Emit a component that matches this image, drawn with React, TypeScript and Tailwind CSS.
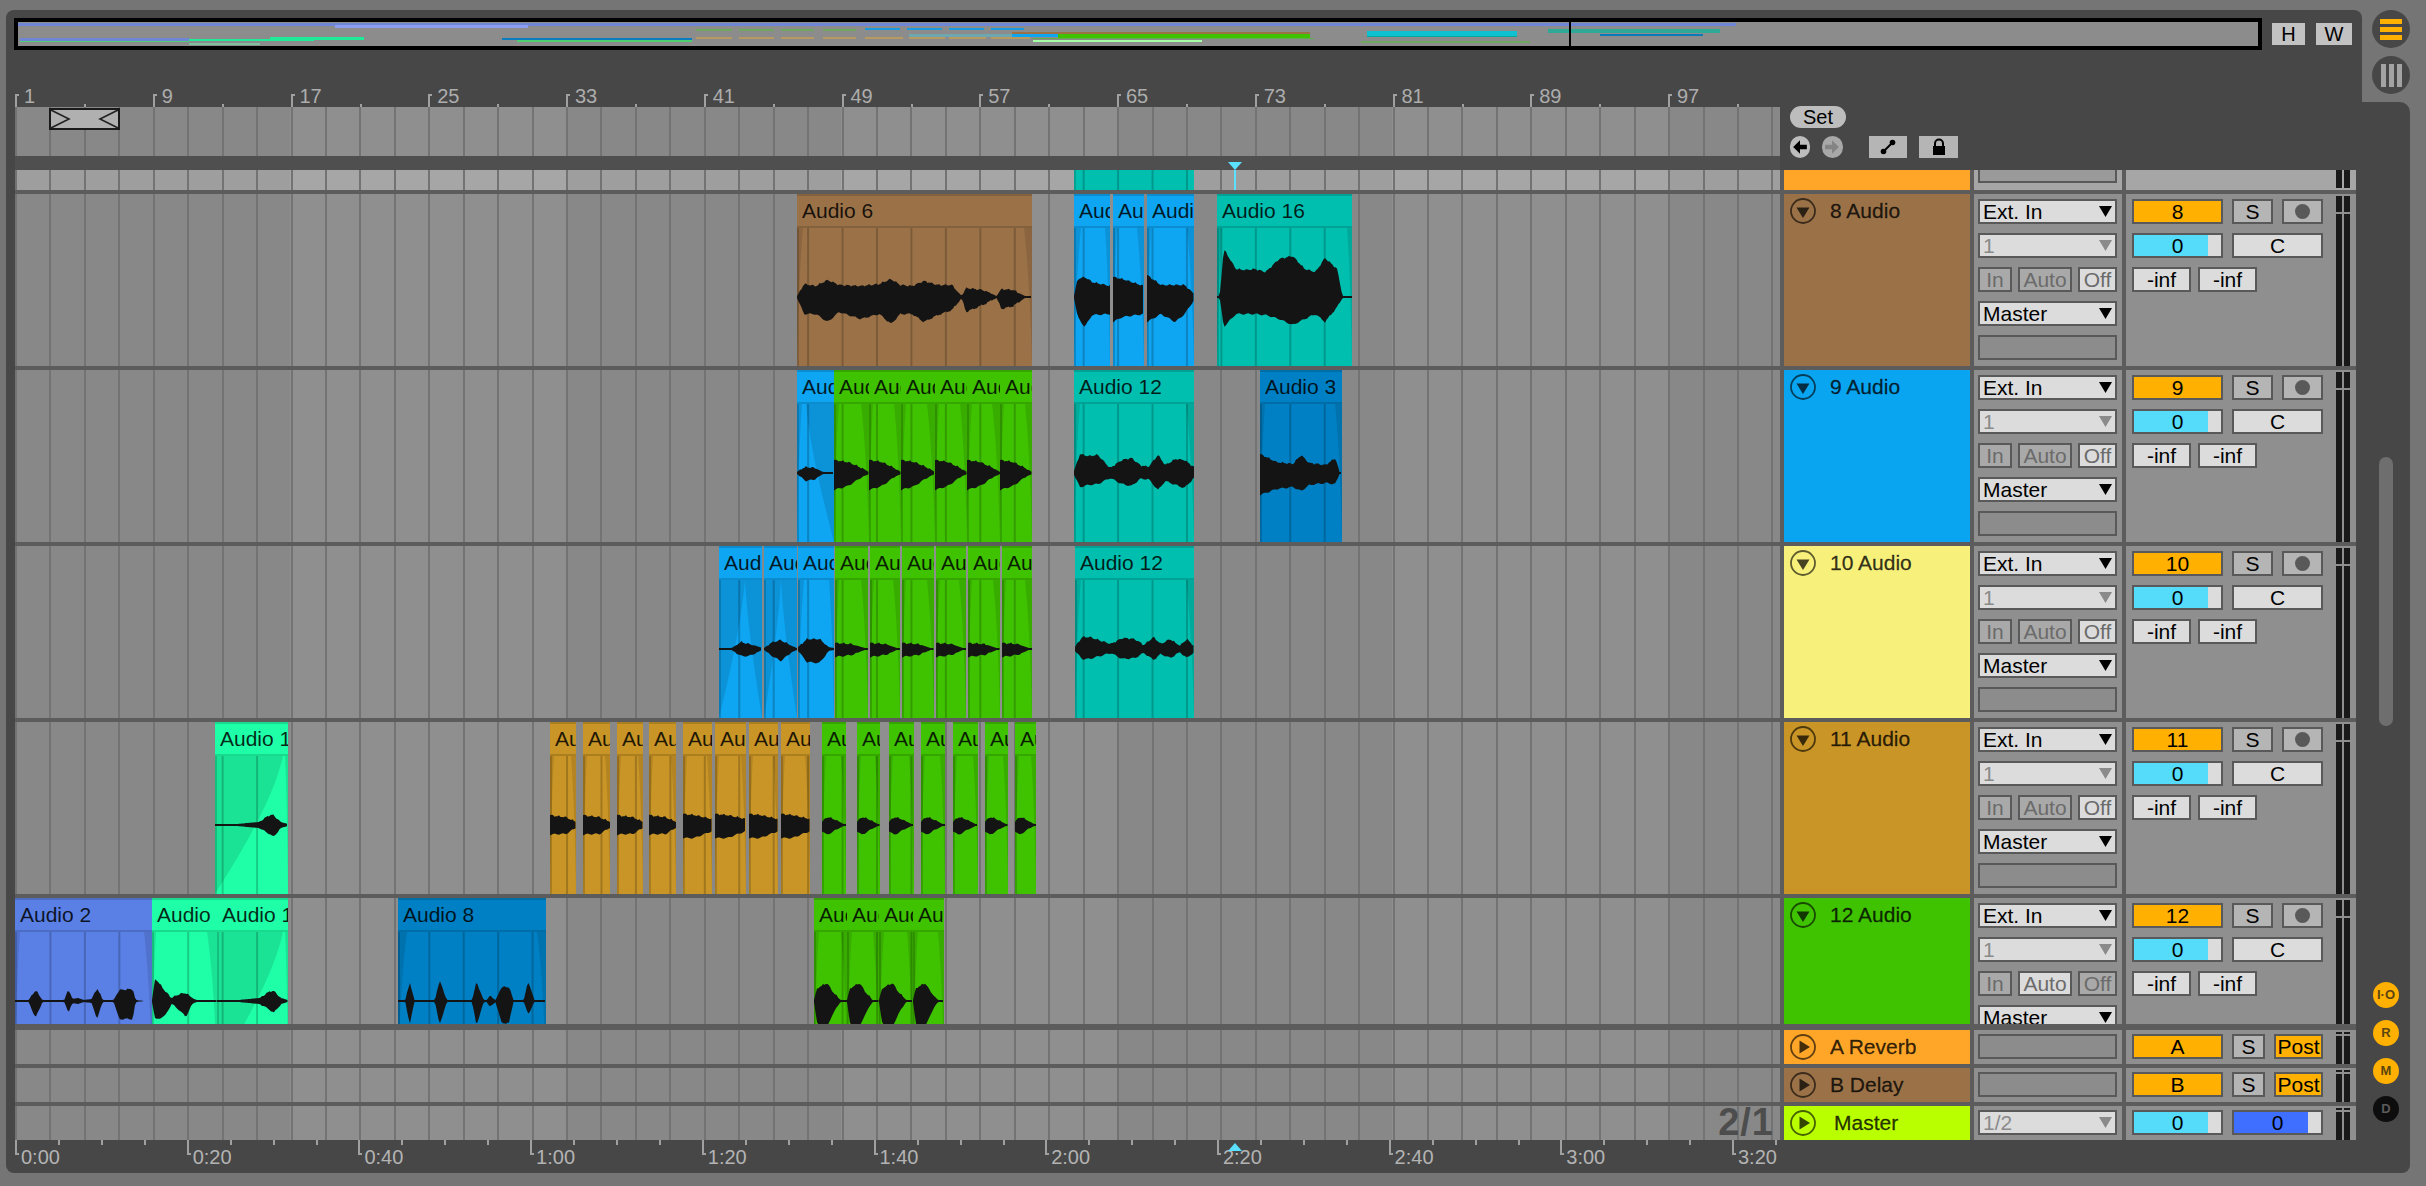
import type { ReactNode } from "react";

type Env = [number, number, number][];

interface ClipData {
  x0: number;
  x1: number;
  name: string;
  color: string;
  env?: Env;
  fade?: [number, number];
}

const GRID_STEP = 34.44;
const ORIGIN = 15;

const GRID =
  "bg-[repeating-linear-gradient(90deg,#737373_0,#737373_2px,transparent_2px,transparent_34.44px),repeating-linear-gradient(90deg,rgba(0,0,0,0.05)_0,rgba(0,0,0,0.05)_275.5px,transparent_275.5px,transparent_551px)]";

const BROWN = "#9b7248";
const BLUE = "#0ea5f2";
const TEAL = "#00bfaf";
const GREEN = "#3fc300";
const DEEP = "#0080c4";
const MINT = "#1effa8";
const OCHRE = "#c99526";
const PERI = "#5a80e6";

const A6: Env = [[0, 1, 1], [0.03, 13, 17], [0.08, 11, 17], [0.13, 17, 25], [0.18, 12, 15], [0.27, 11, 22], [0.35, 13, 17], [0.4, 18, 27], [0.44, 12, 17], [0.49, 11, 17], [0.54, 16, 25], [0.6, 12, 18], [0.66, 12, 13], [0.7, 1, 1], [0.72, 9, 15], [0.79, 7, 8], [0.85, 1, 1], [0.87, 8, 12], [0.92, 7, 9], [0.97, 1, 1], [1, 1, 1]];
const A16: Env = [[0, 1, 1], [0.02, 1, 1], [0.05, 48, 30], [0.14, 28, 17], [0.21, 27, 17], [0.28, 28, 17], [0.36, 25, 18], [0.46, 38, 22], [0.56, 41, 28], [0.65, 28, 22], [0.73, 25, 17], [0.8, 39, 25], [0.89, 28, 10], [0.93, 1, 1], [1, 1, 1]];
const B1: Env = [[0, 1, 1], [0.1, 18, 20], [0.3, 20, 30], [0.5, 15, 18], [1, 11, 17]];
const B2: Env = [[0, 20, 25], [0.3, 18, 20], [1, 11, 17]];
const B3: Env = [[0, 22, 25], [0.3, 12, 17], [0.6, 12, 25], [0.8, 12, 17], [1, 3, 3]];
const A12: Env = [[0, 2, 2], [0.05, 19, 14], [0.12, 17, 12], [0.2, 18, 11], [0.3, 5, 5], [0.4, 13, 11], [0.48, 15, 13], [0.55, 8, 6], [0.62, 6, 6], [0.7, 18, 17], [0.76, 8, 8], [0.85, 14, 12], [0.92, 13, 15], [1, 6, 5]];
const A12B: Env = [[0, 2, 2], [0.06, 12, 10], [0.12, 12, 10], [0.3, 5, 4], [0.4, 11, 10], [0.5, 10, 9], [0.58, 4, 4], [0.66, 12, 11], [0.72, 5, 5], [0.8, 10, 9], [0.88, 3, 3], [0.94, 10, 9], [1, 3, 3]];
const A3: Env = [[0, 19, 22], [0.2, 11, 16], [0.4, 9, 14], [0.5, 18, 18], [0.6, 10, 12], [0.8, 8, 10], [0.92, 15, 11], [0.97, 1, 1], [1, 1, 1]];
const DROP_S: Env = [[0, 1, 1], [0.1, 4, 4], [0.25, 6, 8], [0.5, 5, 6], [0.7, 1, 1], [1, 1, 1]];
const POINT_L: Env = [[0, 13, 17], [0.4, 11, 13], [0.8, 5, 4], [1, 1, 1]];
const POINT_M: Env = [[0, 6, 8], [0.5, 5, 6], [0.9, 1, 1], [1, 1, 1]];
const POINT_11: Env = [[0, 3, 6], [0.2, 8, 10], [0.5, 6, 6], [0.9, 1, 1], [1, 1, 1]];
const BELL_1: Env = [[0, 1, 1], [0.3, 1, 1], [0.5, 7, 7], [0.7, 5, 7], [0.95, 2, 2], [1, 1, 1]];
const BELL_2: Env = [[0, 1, 1], [0.2, 6, 6], [0.5, 9, 12], [0.85, 3, 3], [1, 1, 1]];
const BELL_3: Env = [[0, 2, 2], [0.25, 10, 13], [0.6, 10, 14], [0.85, 2, 2], [1, 1, 1]];
const BLOCK_A: Env = [[0, 10, 10], [0.2, 9, 9], [0.6, 8, 9], [1, 3, 3]];
const BLOCK_B: Env = [[0, 11, 13], [0.4, 10, 13], [1, 6, 6]];
const SWELL: Env = [[0, 1, 1], [0.3, 1, 1], [0.6, 3, 3], [0.75, 10, 9], [0.8, 10, 12], [0.9, 3, 3], [1, 1, 1]];
const SPIKES_2: Env = [[0, 1, 1], [0.1, 1, 1], [0.15, 11, 17], [0.2, 1, 1], [0.36, 1, 1], [0.39, 12, 11], [0.42, 2, 2], [0.46, 3, 3], [0.5, 1, 1], [0.56, 2, 2], [0.6, 13, 18], [0.64, 1, 1], [0.72, 1, 1], [0.76, 11, 18], [0.86, 12, 18], [0.88, 1, 1], [0.95, 0, 0], [1, 0, 0]];
const HIT: Env = [[0, 1, 1], [0.05, 23, 19], [0.2, 10, 15], [0.3, 3, 3], [0.42, 7, 9], [0.52, 8, 16], [0.62, 3, 3], [0.68, 1, 1], [1, 1, 1]];
const SPIKES_8: Env = [[0, 1, 1], [0.05, 1, 1], [0.08, 19, 24], [0.11, 1, 1], [0.25, 1, 1], [0.28, 21, 24], [0.33, 1, 1], [0.5, 1, 1], [0.53, 19, 24], [0.58, 1, 1], [0.6, 1, 1], [0.62, 5, 6], [0.66, 1, 1], [0.7, 14, 22], [0.75, 14, 22], [0.78, 1, 1], [0.85, 1, 1], [0.88, 20, 14], [0.92, 1, 1], [1, 1, 1]];
const BUMP: Env = [[0, 1, 1], [0.1, 13, 24], [0.4, 18, 26], [0.55, 10, 14], [0.8, 1, 1], [1, 1, 1]];

const ROW_8: ClipData[] = [
  { x0: 797, x1: 1032, name: "Audio 6", color: BROWN, env: A6, fade: [6, 8] },
  { x0: 1074, x1: 1110, name: "Audio", color: BLUE, env: B1, fade: [7, 5] },
  { x0: 1113, x1: 1144, name: "Audio", color: BLUE, env: B2, fade: [4, 7] },
  { x0: 1147, x1: 1194, name: "Audio", color: BLUE, env: B3, fade: [4, 7] },
  { x0: 1217, x1: 1352, name: "Audio 16", color: TEAL, env: A16, fade: [5, 5] },
];

const ROW_9: ClipData[] = [
  { x0: 797, x1: 834, name: "Audio", color: BLUE, env: DROP_S, fade: [5, 28] },
  { x0: 834, x1: 869, name: "Audio", color: GREEN, env: POINT_L, fade: [5, 8] },
  { x0: 869, x1: 901, name: "Audio", color: GREEN, env: POINT_L, fade: [4, 7] },
  { x0: 901, x1: 935, name: "Audio", color: GREEN, env: POINT_L, fade: [5, 8] },
  { x0: 935, x1: 967, name: "Audio", color: GREEN, env: POINT_L, fade: [4, 7] },
  { x0: 967, x1: 1000, name: "Audio", color: GREEN, env: POINT_L, fade: [5, 8] },
  { x0: 1000, x1: 1032, name: "Audio", color: GREEN, env: POINT_L, fade: [4, 7] },
  { x0: 1074, x1: 1194, name: "Audio 12", color: TEAL, env: A12, fade: [6, 8] },
  { x0: 1260, x1: 1342, name: "Audio 3", color: DEEP, env: A3, fade: [5, 7] },
];

const ROW_10: ClipData[] = [
  { x0: 719, x1: 762, name: "Audio", color: BLUE, env: BELL_1, fade: [26, 17] },
  { x0: 764, x1: 797, name: "Audio", color: BLUE, env: BELL_2, fade: [17, 16] },
  { x0: 798, x1: 834, name: "Audio", color: BLUE, env: BELL_3, fade: [6, 5] },
  { x0: 835, x1: 868, name: "Audio", color: GREEN, env: POINT_M, fade: [4, 7] },
  { x0: 870, x1: 900, name: "Audio", color: GREEN, env: POINT_M, fade: [4, 7] },
  { x0: 902, x1: 934, name: "Audio", color: GREEN, env: POINT_M, fade: [4, 7] },
  { x0: 936, x1: 966, name: "Audio", color: GREEN, env: POINT_M, fade: [4, 7] },
  { x0: 968, x1: 1000, name: "Audio", color: GREEN, env: POINT_M, fade: [4, 7] },
  { x0: 1002, x1: 1032, name: "Audio", color: GREEN, env: POINT_M, fade: [4, 7] },
  { x0: 1075, x1: 1194, name: "Audio 12", color: TEAL, env: A12B, fade: [6, 8] },
];

const ROW_11: ClipData[] = [
  { x0: 215, x1: 288, name: "Audio 14", color: MINT, env: SWELL, fade: [68, 3] },
  { x0: 550, x1: 576, name: "Audio", color: OCHRE, env: BLOCK_A, fade: [4, 5] },
  { x0: 583, x1: 610, name: "Audio", color: OCHRE, env: BLOCK_A, fade: [4, 5] },
  { x0: 617, x1: 643, name: "Audio", color: OCHRE, env: BLOCK_A, fade: [4, 5] },
  { x0: 649, x1: 676, name: "Audio", color: OCHRE, env: BLOCK_A, fade: [4, 5] },
  { x0: 683, x1: 712, name: "Audio", color: OCHRE, env: BLOCK_B, fade: [4, 5] },
  { x0: 715, x1: 746, name: "Audio", color: OCHRE, env: BLOCK_B, fade: [4, 5] },
  { x0: 749, x1: 778, name: "Audio", color: OCHRE, env: BLOCK_B, fade: [4, 5] },
  { x0: 781, x1: 810, name: "Audio", color: OCHRE, env: BLOCK_B, fade: [4, 5] },
  { x0: 822, x1: 846, name: "Audio", color: GREEN, env: POINT_11, fade: [4, 5] },
  { x0: 857, x1: 880, name: "Audio", color: GREEN, env: POINT_11, fade: [4, 5] },
  { x0: 889, x1: 914, name: "Audio", color: GREEN, env: POINT_11, fade: [4, 5] },
  { x0: 921, x1: 945, name: "Audio", color: GREEN, env: POINT_11, fade: [4, 5] },
  { x0: 953, x1: 978, name: "Audio", color: GREEN, env: POINT_11, fade: [4, 5] },
  { x0: 985, x1: 1008, name: "Audio", color: GREEN, env: POINT_11, fade: [4, 5] },
  { x0: 1015, x1: 1036, name: "Audio", color: GREEN, env: POINT_11, fade: [4, 5] },
];

const ROW_12: ClipData[] = [
  { x0: 15, x1: 152, name: "Audio 2", color: PERI, env: SPIKES_2, fade: [5, 8] },
  { x0: 152, x1: 217, name: "Audio 14", color: MINT, env: HIT, fade: [4, 10] },
  { x0: 217, x1: 288, name: "Audio 14", color: MINT, env: SWELL, fade: [66, 3] },
  { x0: 398, x1: 546, name: "Audio 8", color: DEEP, env: SPIKES_8, fade: [9, 9] },
  { x0: 814, x1: 847, name: "Audio", color: GREEN, env: BUMP, fade: [5, 6] },
  { x0: 847, x1: 879, name: "Audio", color: GREEN, env: BUMP, fade: [5, 6] },
  { x0: 879, x1: 913, name: "Audio", color: GREEN, env: BUMP, fade: [5, 6] },
  { x0: 913, x1: 944, name: "Audio", color: GREEN, env: BUMP, fade: [5, 6] },
];

const TRACKS = [
  { num: "8", name: "8 Audio", color: BROWN, height: "h-[172px]", clips: ROW_8 },
  { num: "9", name: "9 Audio", color: "#0aa5f0", height: "h-[172px]", clips: ROW_9 },
  { num: "10", name: "10 Audio", color: "#f7f07a", height: "h-[172px]", clips: ROW_10 },
  { num: "11", name: "11 Audio", color: OCHRE, height: "h-[172px]", clips: ROW_11 },
  { num: "12", name: "12 Audio", color: GREEN, height: "h-[126px]", clips: ROW_12, auto: true },
];

const OVERVIEW = [
  { x: 18, y: 23, w: 1718, h: 3, c: "#6f86d6" },
  { x: 335, y: 25, w: 193, h: 3, c: "#8c9cf0" },
  { x: 20, y: 38, w: 169, h: 3, c: "#6f86d6" },
  { x: 20, y: 41, w: 169, h: 1, c: "#4fd070" },
  { x: 189, y: 39, w: 125, h: 2, c: "#1eea98" },
  { x: 270, y: 37, w: 94, h: 3, c: "#1eea98" },
  { x: 189, y: 43, w: 71, h: 2, c: "#7fc0a0" },
  { x: 502, y: 38, w: 190, h: 2, c: "#0c7cc0" },
  { x: 517, y: 40, w: 175, h: 2, c: "#4fd070" },
  { x: 696, y: 29, w: 36, h: 2, c: "#6ea860" },
  { x: 739, y: 29, w: 35, h: 2, c: "#6ea860" },
  { x: 781, y: 29, w: 33, h: 2, c: "#6ea860" },
  { x: 823, y: 29, w: 33, h: 2, c: "#6ea860" },
  { x: 696, y: 37, w: 36, h: 2, c: "#b89a60" },
  { x: 739, y: 37, w: 35, h: 2, c: "#b89a60" },
  { x: 781, y: 37, w: 33, h: 2, c: "#b89a60" },
  { x: 823, y: 37, w: 33, h: 2, c: "#b89a60" },
  { x: 865, y: 28, w: 35, h: 2, c: "#1c9ae0" },
  { x: 907, y: 28, w: 35, h: 2, c: "#1c9ae0" },
  { x: 949, y: 28, w: 35, h: 2, c: "#1c9ae0" },
  { x: 991, y: 28, w: 33, h: 2, c: "#1c9ae0" },
  { x: 865, y: 37, w: 38, h: 2, c: "#b89a60" },
  { x: 909, y: 37, w: 36, h: 2, c: "#b89a60" },
  { x: 949, y: 37, w: 37, h: 2, c: "#b89a60" },
  { x: 991, y: 37, w: 39, h: 2, c: "#b89a60" },
  { x: 909, y: 34, w: 103, h: 3, c: "#6fa7b0" },
  { x: 1012, y: 32, w: 298, h: 2, c: "#9b7248" },
  { x: 1012, y: 34, w: 46, h: 3, c: "#0ea5f2" },
  { x: 1058, y: 34, w: 252, h: 4, c: "#3fc300" },
  { x: 1033, y: 38, w: 281, h: 1, c: "#5eb04a" },
  { x: 1033, y: 40, w: 169, h: 2, c: "#a6ffa6" },
  { x: 1367, y: 31, w: 150, h: 5, c: "#0ec0d0" },
  { x: 1367, y: 36, w: 150, h: 1, c: "#00a89a" },
  { x: 1361, y: 41, w: 169, h: 2, c: "#6ea860" },
  { x: 1548, y: 29, w: 172, h: 4, c: "#30a898" },
  { x: 1600, y: 34, w: 103, h: 2, c: "#0a7ab8" },
  { x: 1569, y: 22, w: 2, h: 24, c: "#000000" },
];

const BAR_LABELS = Array.from({ length: 13 }, (_, i) => ({ label: String(1 + i * 8), x: i * 137.75 }));
const TIME_LABELS = Array.from({ length: 11 }, (_, i) => {
  const total = i * 20;
  const sec = total % 60;
  return { label: `${Math.floor(total / 60)}:${sec === 0 ? "00" : sec}`, x: i * 171.7 };
});

function wavePath(env: Env, w: number, c: number) {
  const at = (t: number): [number, number] => {
    for (let i = 1; i < env.length; i++) {
      if (t <= env[i][0]) {
        const [t0, u0, d0] = env[i - 1];
        const [t1, u1, d1] = env[i];
        const f = (t - t0) / (t1 - t0 || 1);
        return [u0 + (u1 - u0) * f, d0 + (d1 - d0) * f];
      }
    }
    return [env[env.length - 1][1], env[env.length - 1][2]];
  };
  const top: string[] = [];
  const bottom: string[] = [];
  for (let x = 0; x <= w; x += 1.5) {
    const [u, d] = at(x / w);
    const nu = u > 4 ? Math.sin(x * 0.9) * 0.7 + Math.sin(x * 2.3) * 0.4 : 0;
    const nd = d > 4 ? Math.sin(x * 0.7 + 2) * 0.7 + Math.sin(x * 2.1) * 0.4 : 0;
    top.push(`${x},${(c - u - nu).toFixed(1)}`);
    bottom.unshift(`${x},${(c + d + nd).toFixed(1)}`);
  }
  return `M${top.join("L")}L${bottom.join("L")}Z`;
}

function gridLines(x0: number, x1: number) {
  const out: number[] = [];
  for (let n = 0; n < 60; n++) {
    const x = ORIGIN + n * GRID_STEP;
    if (x > x0 + 1 && x < x1 - 1) out.push(x - x0);
  }
  return out;
}

// wide fades get a bell-like edge, narrow ones stay a thin wedge
function fadeControl(f: number) {
  return f > 15 ? 0.85 : 0.3;
}

function ClipBody({ clip, height }: { clip: ClipData; height: number }) {
  const w = clip.x1 - clip.x0;
  const [fi, fo] = clip.fade ?? [0, 0];
  return (
    <svg width={w} height={height} className="block shrink-0">
      {fi > 0 && (
        <path d={`M0,0L${fi},0Q${fi * fadeControl(fi)},${height * 0.35} 0,${height}Z`} fill="rgba(0,0,0,0.11)" />
      )}
      {fo > 0 && (
        <path d={`M${w},0L${w - fo},0Q${w - fo * fadeControl(fo)},${height * 0.35} ${w},${height}Z`} fill="rgba(0,0,0,0.11)" />
      )}
      {gridLines(clip.x0, clip.x1).map((x) => (
        <rect key={x} x={x} y={0} width={2} height={height} fill="rgba(0,0,0,0.2)" />
      ))}
      <rect x={0} y={0} width={2} height={height} fill="rgba(0,0,0,0.16)" />
      {clip.env && <path d={wavePath(clip.env, w, 69)} fill="#141414" />}
    </svg>
  );
}

function Clip({ clip }: { clip: ClipData }) {
  return (
    <div
      className="absolute top-0 bottom-0 overflow-hidden"
      style={{ left: clip.x0 - ORIGIN, width: clip.x1 - clip.x0, backgroundColor: clip.color }}
    >
      <div className="h-[34px] border-t-2 border-b-2 border-black/15 pl-[5px] text-[21px] leading-[30px] text-black/85 whitespace-nowrap overflow-hidden">
        {clip.name}
      </div>
      <ClipBody clip={clip} height={138} />
    </div>
  );
}

function FoldIcon({ open }: { open: boolean }) {
  return (
    <svg width="26" height="26" viewBox="0 0 26 26" className="shrink-0">
      <circle cx="13" cy="13" r="12" fill="none" stroke="rgba(0,0,0,0.62)" strokeWidth="1.8" />
      {open ? (
        <path d="M6.5 9.5H19.5L13 20Z" fill="rgba(0,0,0,0.72)" />
      ) : (
        <path d="M9.5 6.5V19.5L20 13Z" fill="rgba(0,0,0,0.72)" />
      )}
    </svg>
  );
}

function Box({ className, children }: { className: string; children?: ReactNode }) {
  return (
    <div
      className={`relative h-[25px] shrink-0 overflow-hidden border-2 border-[#595959] text-center text-[21px] leading-[21px] ${className}`}
    >
      {children}
    </div>
  );
}

function Dropdown({ label, disabled }: { label: string; disabled?: boolean }) {
  return (
    <div
      className={`flex h-[25px] w-[139px] shrink-0 items-center justify-between border-2 border-[#595959] bg-[#dcdcdc] pl-[3px] pr-[3px] text-[21px] leading-[21px] ${
        disabled ? "text-[#8a8a8a]" : "text-black"
      }`}
    >
      <span>{label}</span>
      <svg width="13" height="11" viewBox="0 0 13 11">
        <path d="M0 0H13L6.5 11Z" fill={disabled ? "#8a8a8a" : "#000"} />
      </svg>
    </div>
  );
}

function Meter({ tall }: { tall: boolean }) {
  const bar = (
    <div className="flex w-[6px] flex-col gap-[2px]">
      <div className={`${tall ? "h-[16px]" : "h-[2px]"} bg-[#191919]`} />
      <div className="flex-1 bg-[#191919]" />
    </div>
  );
  return (
    <div className="flex h-full w-[14px] shrink-0 gap-[2px] pt-[2px]">
      {bar}
      {bar}
    </div>
  );
}

function Faded({ value, color, fill, w }: { value: string; color: string; fill: string; w: string }) {
  return (
    <Box className={`${w} bg-[#dcdcdc] text-black`}>
      <div className={`absolute inset-y-0 left-0 ${color} ${fill}`} />
      <span className="relative">{value}</span>
    </Box>
  );
}

function Rec() {
  return (
    <Box className="flex w-[41px] items-center justify-center bg-[#b5b5b5]">
      <div className="h-[15px] w-[15px] rounded-full bg-[#595959]" />
    </Box>
  );
}

function AudioTrack({ track }: { track: (typeof TRACKS)[number] }) {
  return (
    <div className={`flex ${track.height} gap-[4px]`}>
      <div className={`relative w-[1765px] shrink-0 overflow-hidden bg-[#8f8f8f] ${GRID}`}>
        {track.clips.map((c) => (
          <Clip key={c.x0} clip={c} />
        ))}
      </div>
      <div className="flex w-[186px] shrink-0 gap-[14px] pl-[6px] pt-[4px]" style={{ backgroundColor: track.color }}>
        <FoldIcon open />
        <span className="text-[21px] leading-[26px] text-black/80 [-webkit-text-stroke:0.3px_rgba(0,0,0,0.7)]">
          {track.name}
        </span>
      </div>
      <div className="flex w-[148px] shrink-0 flex-col gap-[9px] overflow-hidden bg-[#8f8f8f] pl-[4px] pt-[5px]">
        <Dropdown label="Ext. In" />
        <Dropdown label="1" disabled />
        <div className="flex gap-[6px]">
          <Box className="w-[34px] bg-[#a9a9a9] text-[#6b6b6b]">In</Box>
          <Box className={`w-[54px] ${track.auto ? "bg-[#dcdcdc]" : "bg-[#a9a9a9]"} text-[#6b6b6b]`}>Auto</Box>
          <Box className={`w-[39px] ${track.auto ? "bg-[#a9a9a9]" : "bg-[#dcdcdc]"} text-[#6b6b6b]`}>Off</Box>
        </div>
        <Dropdown label="Master" />
        <Box className="w-[139px] bg-[#8c8c8c]" />
      </div>
      <div className="flex w-[230px] shrink-0 justify-between bg-[#8f8f8f] pl-[6px] pr-[6px] pt-[5px]">
        <div className="flex flex-col gap-[9px]">
          <div className="flex gap-[9px]">
            <Box className="w-[91px] bg-[#ffb000] text-black">{track.num}</Box>
            <Box className="w-[41px] bg-[#b5b5b5] text-black">S</Box>
            <Rec />
          </div>
          <div className="flex gap-[9px]">
            <Faded value="0" color="bg-[#55dcfa]" fill="w-[74px]" w="w-[91px]" />
            <Box className="w-[91px] bg-[#dcdcdc] text-black">C</Box>
          </div>
          <div className="flex gap-[7px]">
            <Box className="w-[59px] bg-[#dcdcdc] text-black">-inf</Box>
            <Box className="w-[59px] bg-[#dcdcdc] text-black">-inf</Box>
          </div>
        </div>
        <div className="-mt-[5px]">
          <Meter tall />
        </div>
      </div>
    </div>
  );
}

function ReturnTrack({
  name,
  letter,
  color,
  overlay,
}: {
  name: string;
  letter: string;
  color: string;
  overlay?: boolean;
}) {
  return (
    <div className="flex h-[34px] gap-[4px]">
      <div className={`relative w-[1765px] shrink-0 bg-[#8f8f8f] ${GRID}`}>
        {overlay && (
          <span className="absolute right-[6px] top-[-3px] text-[38px] font-bold leading-[38px] tracking-[1px] text-[#4d4d4d]">
            2/1
          </span>
        )}
      </div>
      <div
        className={`flex w-[186px] shrink-0 pl-[6px] pt-[4px] ${overlay ? "gap-[18px]" : "gap-[14px]"}`}
        style={{ backgroundColor: color }}
      >
        <FoldIcon open={false} />
        <span className="text-[21px] leading-[26px] text-black/80 [-webkit-text-stroke:0.3px_rgba(0,0,0,0.7)]">
          {name}
        </span>
      </div>
      <div className="w-[148px] shrink-0 bg-[#8f8f8f] pl-[4px] pt-[4px]">
        {overlay ? <Dropdown label="1/2" disabled /> : <Box className="w-[139px] bg-[#8c8c8c]" />}
      </div>
      <div className="flex w-[230px] shrink-0 justify-between bg-[#8f8f8f] pl-[6px] pr-[6px] pt-[4px]">
        {overlay ? (
          <div className="flex gap-[9px]">
            <Faded value="0" color="bg-[#55dcfa]" fill="w-[74px]" w="w-[91px]" />
            <Faded value="0" color="bg-[#3f6fff]" fill="w-[74px]" w="w-[91px]" />
          </div>
        ) : (
          <div className="flex gap-[9px]">
            <Box className="w-[91px] bg-[#ffb000] text-black">{letter}</Box>
            <Box className="w-[33px] bg-[#b5b5b5] text-black">S</Box>
            <Box className="w-[49px] bg-[#ffb000] text-black">Post</Box>
          </div>
        )}
        <div className="-mt-[4px]">
          <Meter tall={false} />
        </div>
      </div>
    </div>
  );
}

function BarRuler() {
  return (
    <div className="relative h-[57px] text-[#adadad]">
      {BAR_LABELS.map((b) => (
        <div key={b.label} className="absolute top-0 bottom-0" style={{ left: b.x }}>
          <div className="absolute left-0 top-[44px] h-[13px] w-[2px] bg-[#a0a0a0]" />
          <div className="absolute left-0 top-[44px] h-[2px] w-[4px] bg-[#a0a0a0]" />
          <span className="absolute left-[9px] top-[34px] text-[20px] leading-[24px]">{b.label}</span>
          <div className="absolute left-[69px] bottom-0 h-[3px] w-[2px] bg-[#a0a0a0]" />
        </div>
      ))}
    </div>
  );
}

function TimeRuler() {
  return (
    <div className="relative ml-[9px] h-[33px] w-[1765px] overflow-hidden text-[#b3b3b3]">
      {TIME_LABELS.map((t) => (
        <div key={t.label} className="absolute top-0 bottom-0" style={{ left: t.x }}>
          <div className="absolute left-0 top-0 h-[15px] w-[2px] bg-[#a0a0a0]" />
          <div className="absolute left-0 top-[13px] h-[2px] w-[4px] bg-[#a0a0a0]" />
          <span className="absolute left-[6px] top-[5px] text-[20px] leading-[24px]">{t.label}</span>
          <div className="absolute left-[43px] top-0 h-[5px] w-[2px] bg-[#a0a0a0]" />
          <div className="absolute left-[86px] top-0 h-[5px] w-[2px] bg-[#a0a0a0]" />
          <div className="absolute left-[129px] top-0 h-[5px] w-[2px] bg-[#a0a0a0]" />
        </div>
      ))}
      <svg width="14" height="8" viewBox="0 0 14 8" className="absolute left-[1213px] top-[3px]">
        <path d="M7 0L14 8H0Z" fill="#5ce0ff" />
      </svg>
    </div>
  );
}

function ViewToggles() {
  return (
    <div className="flex w-[178px] flex-col pl-[10px] pt-[56px]">
      <div className="flex h-[22px] w-[56px] items-center justify-center rounded-full bg-[#bdbdbd] text-[20px] text-black">
        Set
      </div>
      <div className="mt-[8px] flex items-center">
        <div className="flex h-[22px] w-[22px] items-center justify-center rounded-full bg-[#bdbdbd]">
          <svg width="16" height="16" viewBox="0 0 14 14">
            <path d="M1 7L7 1V5H13V9H7V13Z" fill="#000" />
          </svg>
        </div>
        <div className="ml-[12px] flex h-[22px] w-[22px] items-center justify-center rounded-full bg-[#a8a8a8]">
          <svg width="16" height="16" viewBox="0 0 14 14">
            <path d="M13 7L7 1V5H1V9H7V13Z" fill="#848484" />
          </svg>
        </div>
        <div className="ml-[26px] flex h-[22px] w-[42px] items-center justify-center bg-[#b5b5b5]">
          <svg width="18" height="18" viewBox="0 0 18 18">
            <path d="M5 13L13 5" stroke="#000" strokeWidth="2" />
            <circle cx="4.5" cy="13.5" r="2.8" fill="#000" />
            <circle cx="13.5" cy="4.5" r="2.8" fill="#000" />
          </svg>
        </div>
        <div className="ml-[12px] flex h-[22px] w-[42px] items-center justify-center bg-[#b5b5b5]">
          <svg width="16" height="18" viewBox="0 0 16 18">
            <path d="M4 8V5.5a4 4 0 0 1 8 0V8" fill="none" stroke="#000" strokeWidth="2" />
            <rect x="2" y="8" width="12" height="9" fill="#000" />
          </svg>
        </div>
      </div>
    </div>
  );
}

const IO_BUTTONS = [
  { t: "I·O", c: "bg-[#ffb000] text-[#5b4510]" },
  { t: "R", c: "bg-[#ffb000] text-[#5b4510]" },
  { t: "M", c: "bg-[#ffb000] text-[#5b4510]" },
  { t: "D", c: "bg-[#0d0d0d] text-[#5a5a5a]" },
];

export default function App() {
  return (
    <div className="flex h-[1186px] w-[2426px] overflow-hidden bg-[#757575] pl-[6px] pt-[10px] font-['Liberation_Sans',sans-serif]">
      <div className="flex h-[1163px] w-[2356px] shrink-0 flex-col rounded-l-[8px] rounded-tr-[8px] bg-[#474747] pt-[8px]">
        <div className="ml-[8px] flex h-[32px] items-center">
          <div className="relative h-[32px] w-[2248px] shrink-0 border-[4px] border-black bg-[#8c8c8c]">
            {OVERVIEW.map((o) => (
              <div
                key={`${o.x}-${o.y}`}
                className="absolute"
                style={{ left: o.x - 18, top: o.y - 22, width: o.w, height: o.h, backgroundColor: o.c }}
              />
            ))}
          </div>
          <div className="ml-[10px] flex h-[22px] w-[33px] items-center justify-center bg-[#c2c2c2] text-[20px] text-black">
            H
          </div>
          <div className="ml-[11px] flex h-[22px] w-[36px] items-center justify-center bg-[#c2c2c2] text-[20px] text-black">
            W
          </div>
        </div>

        <div className="ml-[9px] flex h-[120px]">
          <div className="w-[1765px] shrink-0">
            <BarRuler />
            <div className={`relative h-[49px] bg-[#8f8f8f] ${GRID}`}>
              <div className="absolute left-[34px] top-[1px] h-[22px] w-[71px] border-2 border-[#1a1a1a] bg-[#b0b0b0]">
                <svg width="67" height="18" viewBox="0 0 67 18" className="block">
                  <path d="M0 0L18 9L0 18M67 0L49 9L67 18" fill="none" stroke="#222" strokeWidth="1.6" />
                </svg>
              </div>
            </div>
            <div className="h-[14px] bg-[#4f4f4f]" />
          </div>
          <ViewToggles />
        </div>

        <div className="ml-[9px] flex w-[2341px] flex-col gap-[4px] bg-[#5c5c5c]">
          <div className="flex h-[20px] gap-[4px]">
            <div className={`relative w-[1765px] shrink-0 bg-[#a6a6a6] ${GRID}`}>
              <div className="absolute inset-y-0 left-[1059px] w-[120px] overflow-hidden bg-[#00bfaf]">
                <ClipBody clip={{ x0: 1074, x1: 1194, name: "", color: TEAL }} height={20} />
              </div>
              <div className="absolute inset-y-0 left-[1219px] w-[2px] bg-[#5ce0ff]" />
              <svg width="14" height="8" viewBox="0 0 14 8" className="absolute left-[1213px] top-[-8px]">
                <path d="M0 0H14L7 8Z" fill="#5ce0ff" />
              </svg>
            </div>
            <div className="w-[186px] shrink-0 bg-[#ffa629]" />
            <div className="w-[148px] shrink-0 bg-[#a6a6a6] pl-[4px]">
              <div className="h-[13px] w-[139px] border-x-2 border-b-2 border-[#595959] bg-[#9a9a9a]" />
            </div>
            <div className="flex w-[230px] shrink-0 justify-end bg-[#a6a6a6] pr-[6px]">
              <div className="flex h-[18px] gap-[2px]">
                <div className="w-[6px] bg-[#191919]" />
                <div className="w-[6px] bg-[#191919]" />
              </div>
            </div>
          </div>
          {TRACKS.map((t) => (
            <AudioTrack key={t.num} track={t} />
          ))}
          <div className="mt-[2px]">
            <ReturnTrack name="A Reverb" letter="A" color="#ffa629" />
          </div>
          <ReturnTrack name="B Delay" letter="B" color={BROWN} />
          <ReturnTrack name="Master" letter="" color="#b9ff00" overlay />
        </div>

        <TimeRuler />
      </div>

      <div className="flex w-[48px] shrink-0 flex-col">
        <div className="flex h-[92px] flex-col gap-[8px] pl-[10px]">
          <div className="flex h-[38px] w-[38px] flex-col items-center justify-center gap-[3px] rounded-full bg-[#474747]">
            <div className="h-[5px] w-[22px] bg-[#ffb000]" />
            <div className="h-[5px] w-[22px] bg-[#ffb000]" />
            <div className="h-[5px] w-[22px] bg-[#ffb000]" />
          </div>
          <div className="flex h-[38px] w-[38px] items-center justify-center gap-[3px] rounded-full bg-[#474747]">
            <div className="h-[23px] w-[5px] bg-[#a3a3a3]" />
            <div className="h-[23px] w-[5px] bg-[#a3a3a3]" />
            <div className="h-[23px] w-[5px] bg-[#a3a3a3]" />
          </div>
        </div>
        <div className="flex h-[1071px] flex-col items-center rounded-r-[8px] rounded-tr-[10px] bg-[#474747] pt-[355px]">
          <div className="h-[269px] w-[14px] rounded-full bg-[#6e6e6e]" />
          <div className="mt-[256px] flex flex-col gap-[12px]">
            {IO_BUTTONS.map((b) => (
              <div
                key={b.t}
                className={`flex h-[26px] w-[26px] items-center justify-center rounded-full text-[13px] font-bold ${b.c}`}
              >
                {b.t}
              </div>
            ))}
          </div>
        </div>
      </div>
    </div>
  );
}
